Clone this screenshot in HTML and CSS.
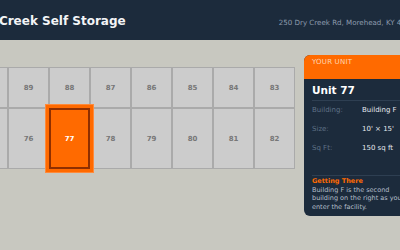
FILE: index.html
```html
<!DOCTYPE html>
<html>
<head>
    <meta charset="UTF-8">
    <meta name="viewport" content="width=device-width, initial-scale=1.0">
    <title>Dry Creek Self Storage - Unit 77</title>
    <link rel="stylesheet" href="styles.css">
</head>
<body>
    <div class="page">
        <header class="header">
            <h1 class="title">Dry Creek Self Storage</h1>
            <div class="address">250 Dry Creek Rd, Morehead, KY 40351</div>
        </header>
        <div class="main">
            <div class="units">
                <div class="unit">90</div>
                <div class="unit">89</div>
                <div class="unit">88</div>
                <div class="unit">87</div>
                <div class="unit">86</div>
                <div class="unit">85</div>
                <div class="unit">84</div>
                <div class="unit">83</div>
                <div class="unit tall">75</div>
                <div class="unit tall">76</div>
                <div class="unit tall selected">77</div>
                <div class="unit tall">78</div>
                <div class="unit tall">79</div>
                <div class="unit tall">80</div>
                <div class="unit tall">81</div>
                <div class="unit tall">82</div>
            </div>
            <div class="card">
                <div class="card-head">YOUR UNIT</div>
                <div class="card-body">
                    <h2 class="unit-name">Unit 77</h2>
                    <div class="details">
                        <span class="label">Building:</span><span class="value">Building F</span>
                        <span class="label">Size:</span><span class="value">10' × 15'</span>
                        <span class="label">Sq Ft:</span><span class="value">150 sq ft</span>
                    </div>
                    <div class="directions">
                        <div class="directions-title">Getting There</div>
                        <p>Building F is the second building on the right as you enter the facility.</p>
                    </div>
                </div>
            </div>
        </div>
    </div>
</body>
</html>
```

FILE: styles.css
```css
body {
    margin: 0;
    background: #c8c8c0;
    font-family: "DejaVu Sans", Verdana, sans-serif;
    overflow: hidden;
}
.page {
    width: 480px;
    margin-left: -45px;
}
.header {
    box-sizing: border-box;
    height: 40px;
    padding: 14px 0 0 16px;
    background: #1c2b3c;
    display: flex;
    align-items: baseline;
}
.title {
    margin: 0;
    font-size: 12px;
    line-height: 14px;
    font-weight: bold;
    color: #f2f4f6;
    white-space: nowrap;
}
.address {
    margin-left: 153px;
    font-size: 7.1px;
    color: #8d9cae;
    white-space: nowrap;
}
.main {
    display: flex;
    align-items: flex-start;
    gap: 9px;
    padding: 15px 0 0 12px;
}
.units {
    margin-top: 12px;
    display: grid;
    grid-template-columns: repeat(8, 41px);
    grid-template-rows: 41px 61px;
}
.unit {
    box-sizing: border-box;
    background: #cccccc;
    border: 1px solid #aaaaaa;
    display: flex;
    align-items: center;
    justify-content: center;
    font-size: 7px;
    font-weight: bold;
    color: #777777;
}
.unit.selected {
    position: relative;
    z-index: 1;
    background: #ff6a00;
    border: 2px solid #8f2f00;
    box-shadow: 0 0 0 3px #ff6a00, 0 0 0 4px #ff8a3a;
    color: #ffffff;
}
.card {
    width: 116px;
    background: #1c2b3c;
    border-radius: 6px;
    overflow: hidden;
}
.card-head {
    box-sizing: border-box;
    height: 24px;
    padding: 4px 8px 0;
    background: #ff6a00;
    color: #ffd6b3;
    font-size: 7px;
    line-height: 7px;
    letter-spacing: 0.2px;
}
.card-body {
    padding: 0 8px 4px;
}
.unit-name {
    margin: 0;
    padding: 5px 0 3px;
    font-size: 10.5px;
    line-height: 13px;
    font-weight: bold;
    color: #ffffff;
    border-bottom: 1px solid #2e3f52;
}
.details {
    display: grid;
    grid-template-columns: 50px 1fr;
    padding-bottom: 17px;
    font-size: 7px;
    line-height: 19px;
    border-bottom: 1px solid #2e3f52;
}
.label {
    color: #5f7186;
}
.value {
    color: #e4e9ee;
    white-space: nowrap;
}
.directions {
    padding-top: 1px;
    font-size: 6.5px;
    line-height: 8.7px;
}
.directions-title {
    font-weight: bold;
    color: #ff6a00;
}
.directions p {
    margin: 0;
    color: #b4bfcb;
}
```
